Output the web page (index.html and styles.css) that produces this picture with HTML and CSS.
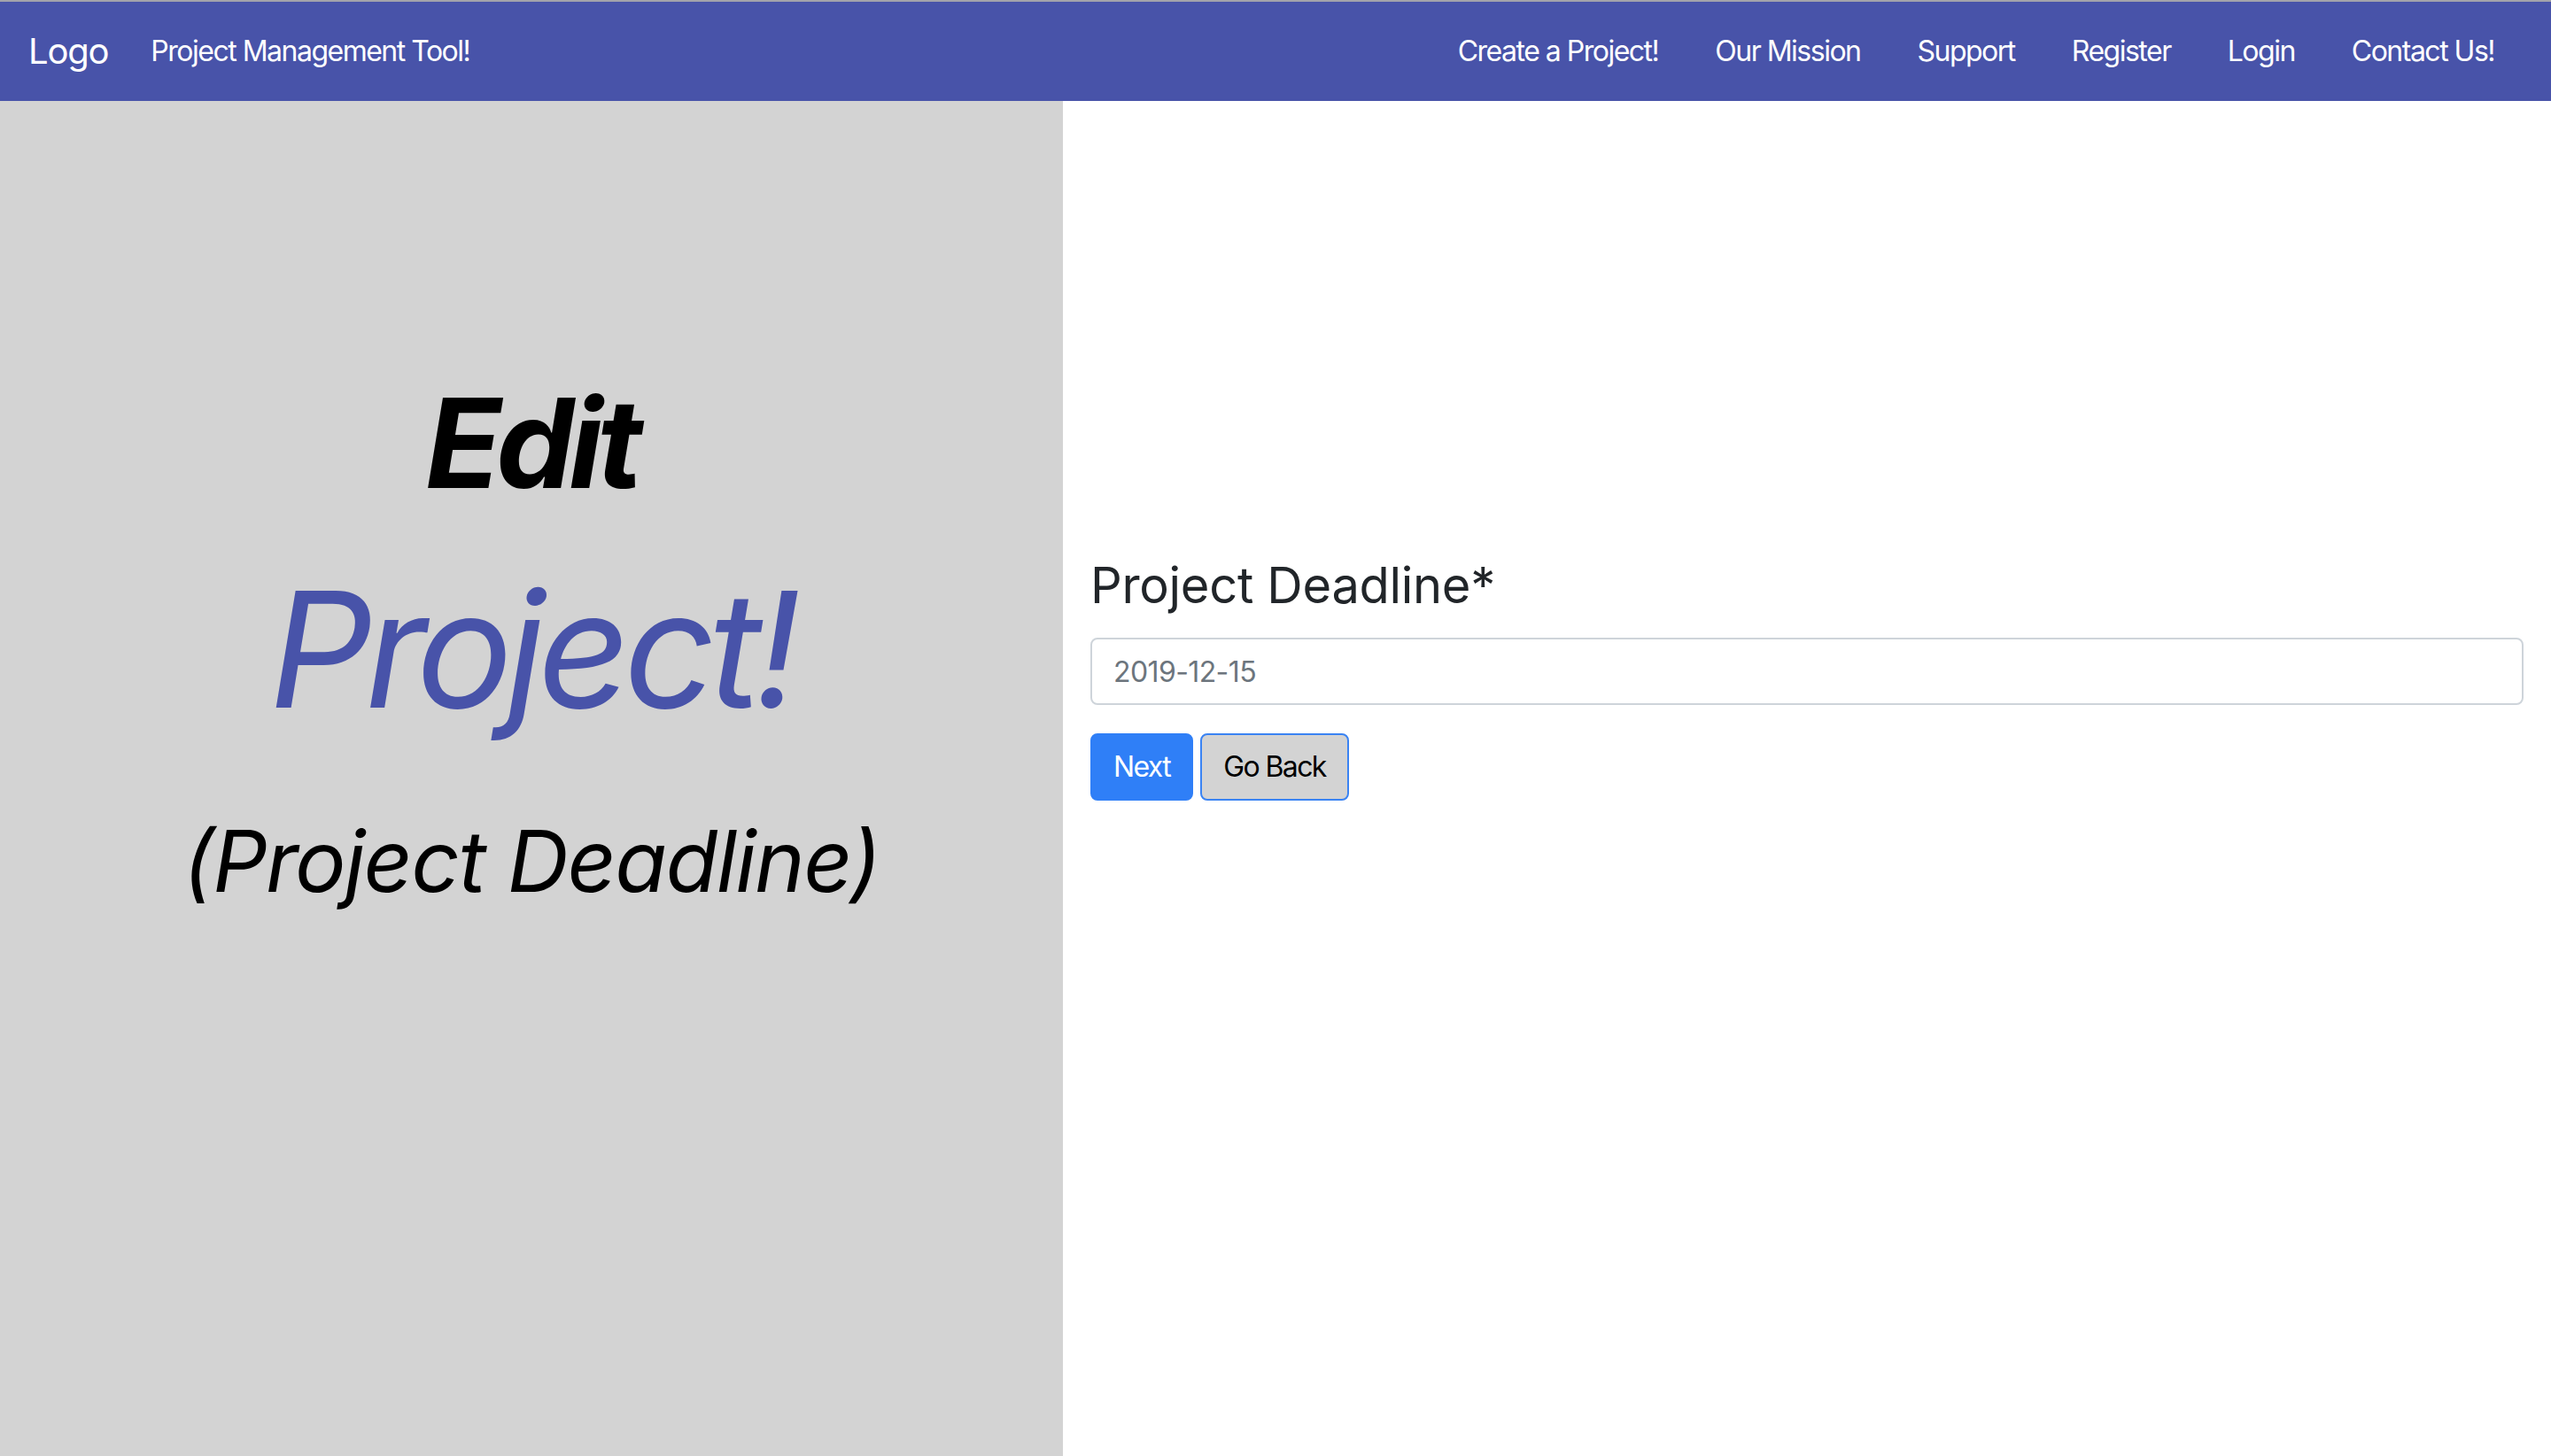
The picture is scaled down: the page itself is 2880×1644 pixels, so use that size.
FILE: index.html
```html
<!DOCTYPE html>
<html lang="en">
<head>
<meta charset="utf-8">
<title>Edit Project</title>
<link rel="stylesheet" href="styles.css">
</head>
<body>
<nav class="navbar">
  <div class="nav-left">
    <a class="brand" href="#">Logo</a>
    <a class="nav-link" href="#">Project Management Tool!</a>
  </div>
  <ul class="nav-right">
    <li><a class="nav-link" href="#">Create a Project!</a></li>
    <li><a class="nav-link" href="#">Our Mission</a></li>
    <li><a class="nav-link" href="#">Support</a></li>
    <li><a class="nav-link" href="#">Register</a></li>
    <li><a class="nav-link" href="#">Login</a></li>
    <li><a class="nav-link" href="#">Contact Us!</a></li>
  </ul>
</nav>
<main class="page">
  <section class="side">
    <h1 class="title-edit">Edit</h1>
    <h1 class="title-project">Project!</h1>
    <h2 class="title-sub">(Project Deadline)</h2>
  </section>
  <section class="content">
    <form class="form">
      <label class="label" for="deadline">Project Deadline*</label>
      <input class="input" id="deadline" type="text" placeholder="2019-12-15">
      <div class="buttons">
        <button type="button" class="btn btn-next">Next</button>
        <button type="button" class="btn btn-back">Go Back</button>
      </div>
    </form>
  </section>
</main>
</body>
</html>
```
FILE: styles.css
```css
* { box-sizing: border-box; }
html, body {
  margin: 0;
  padding: 0;
  height: 100%;
}
body {
  font-family: Inter, "Noto Sans", "Liberation Sans", sans-serif;
  color: #212529;
  background: #ffffff;
  display: flex;
  flex-direction: column;
}
a { text-decoration: none; }

.navbar {
  flex: 0 0 auto;
  height: 114px;
  border-top: 2px solid #a3a3ab;
  background: #4853a9;
  display: flex;
  align-items: center;
  justify-content: space-between;
  padding: 0 64px 0 32px;
}
.nav-left {
  display: flex;
  align-items: center;
}
.brand {
  color: #ffffff;
  font-size: 40px;
  line-height: 1.5;
  margin-right: 48px;
  letter-spacing: -1.2px;
}
.nav-link {
  color: #ffffff;
  font-size: 32px;
  line-height: 1.5;
  letter-spacing: -1.5px;
}
.nav-right {
  list-style: none;
  margin: 0;
  padding: 0;
  display: flex;
  gap: 64px;
}

.page {
  flex: 1 1 auto;
  display: flex;
}
.side {
  width: 1200px;
  flex: 0 0 1200px;
  background: #d3d3d3;
  text-align: center;
  padding-top: 302px;
}
.side h1, .side h2 {
  margin: 0;
  font-style: italic;
  line-height: 1.2;
}
.title-edit {
  font-size: 140px;
  font-weight: 700;
  color: #000000;
  letter-spacing: -6px;
}
.title-project {
  margin-top: 40px !important;
  font-size: 182px;
  font-weight: 400;
  color: #4853a9;
  letter-spacing: -8px;
  line-height: 1.2;
}
.title-sub {
  margin-top: 73px !important;
  font-size: 96px;
  font-weight: 400;
  color: #000000;
  letter-spacing: -1.6px;
}

.content {
  flex: 1 1 auto;
  padding: 514px 31px 0 31px;
}
.form {
  display: flex;
  flex-direction: column;
}
.label {
  font-size: 56px;
  line-height: 1.2;
  font-weight: 400;
  color: #212529;
  margin-bottom: 25px;
  letter-spacing: -0.3px;
}
.input {
  height: 76px;
  width: 100%;
  border: 2px solid #ced4da;
  border-radius: 8px;
  padding: 0 24px;
  font-family: Inter, "Noto Sans", "Liberation Sans", sans-serif;
  font-size: 32px;
  letter-spacing: -0.6px;
  color: #495057;
  background: #ffffff;
  outline: none;
}
.input::placeholder {
  color: #6c757d;
  opacity: 1;
}
.buttons {
  display: flex;
  gap: 8px;
  margin-top: 32px;
}
.btn {
  height: 76px;
  padding: 0 24px;
  border-radius: 8px;
  border: 2px solid transparent;
  font-family: Inter, "Noto Sans", "Liberation Sans", sans-serif;
  font-size: 32px;
  line-height: 1.5;
  letter-spacing: -1.6px;
  cursor: pointer;
}
.btn-next {
  background: #2f7ff7;
  border-color: #2f7ff7;
  color: #ffffff;
}
.btn-back {
  background: #d3d3d3;
  border-color: #3a83f3;
  color: #000000;
}
```
